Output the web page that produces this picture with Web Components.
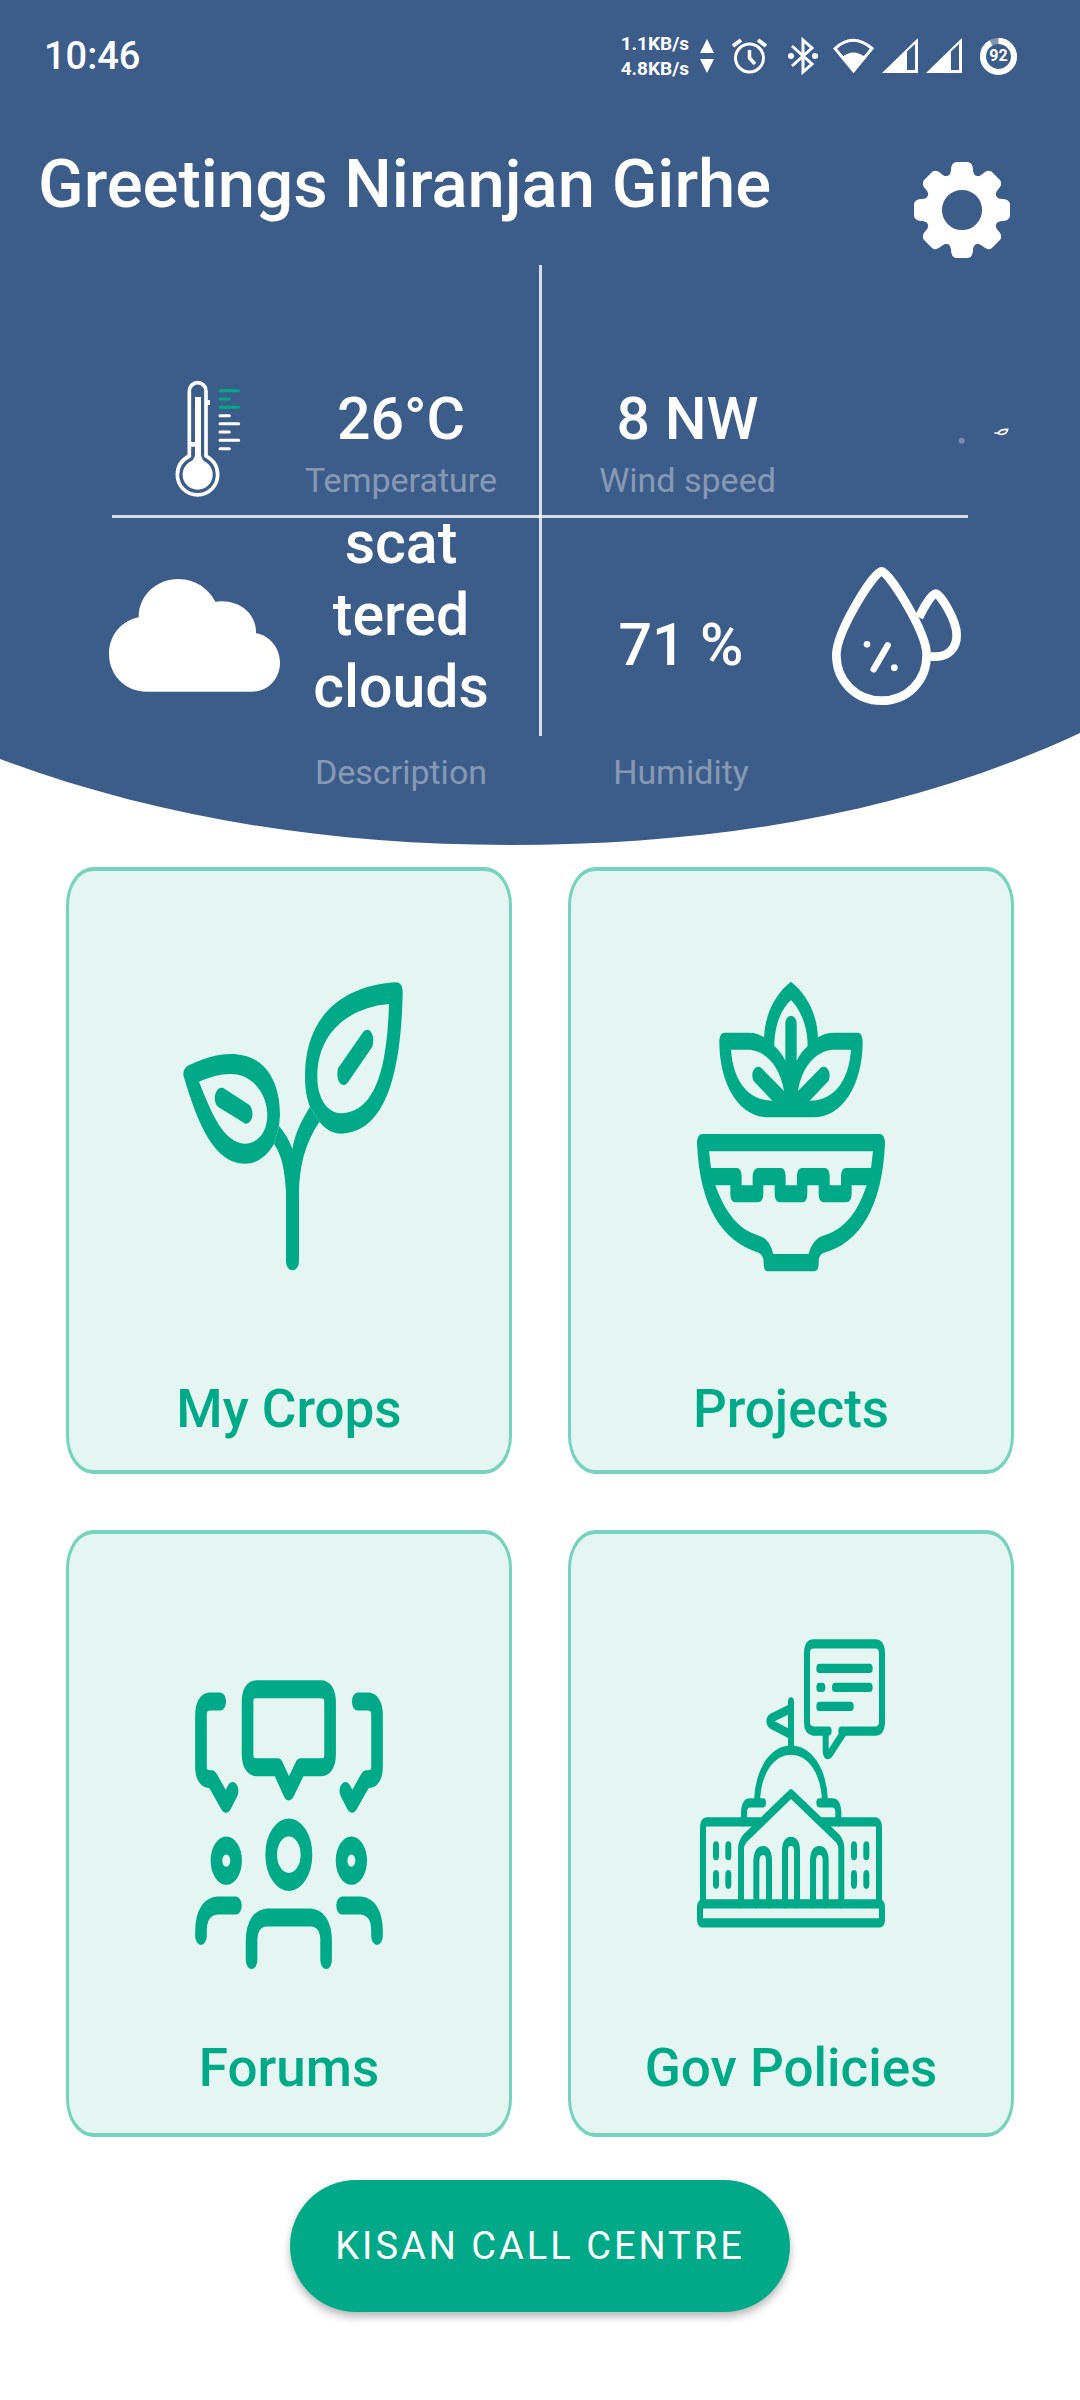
<!DOCTYPE html>
<html lang="en">
<head>
<meta charset="utf-8">
<meta name="viewport" content="width=device-width, initial-scale=1">
<title>Kisan Home</title>
<style>
  html, body { margin: 0; background: #fff; }
  body { font-family: Roboto, "Noto Sans", sans-serif; --green: #00aa88; --mint: #e5f6f2; --mint-edge: #76d3be; }
</style>
</head>
<body>
<kisan-home></kisan-home>

<script>
const cardMark = (box, body, w = 188) => ({ w, h: 289, box, body });
const ICONS = {
  arrows: { w: 14, h: 34, box: '0 0 14 34', body: '<path d="M7 0L14 14H0ZM0 20H14L7 34Z"/>' },
  alarm: { w: 35, h: 36, box: '0 0 35 36', body: '<g fill="none" stroke="currentColor" stroke-width="3"><circle cx="17.500" cy="20" r="14"/><path d="M1 8L9 2M34 8L26 2" stroke-width="4"/><path d="M17.500 12V20L23 26" stroke-width="3.500"/></g>' },
  bluetooth: { w: 36, h: 36, box: '0 0 36 36', body: '<path d="M7 8L27 26L18 34V2L27 10L7 28" fill="none" stroke="currentColor" stroke-width="3"/><circle cx="6" cy="18" r="3"/><circle cx="30" cy="18" r="3"/>' },
  wifi: { w: 41, h: 36, box: '0 0 41 36', body: '<path d="M2 10.500Q20 -6 39 10.500L20.500 33Z" fill="none" stroke="currentColor" stroke-width="3"/><path d="M9 19Q20.500 10 32 19L20.500 35Z"/>' },
  signal: { w: 36, h: 36, box: '0 0 36 36', body: '<path d="M0 35L36 0V35ZM25 13.500V32H33V6Z" fill-rule="evenodd"/>' },
  gear: { w: 96, h: 96, box: '0 0 96 96', body: '<circle cx="48" cy="48" r="28.500" fill="none" stroke="currentColor" stroke-width="17"/>' +
    [0, 45, 90, 135, 180, 225, 270, 315].map(a => `<path transform="rotate(${a} 48 48)" d="M42 0H54Q59 1 59 8Q59 13 65 17H31Q37 13 37 8Q37 1 42 0Z"/>`).join('') },
  thermometer: { w: 172, h: 116, box: '87 123 516 348', body: '<path d="M328 348V153A25 25 0 0 1 378 153V348C400 360 413 380 413 404A60 60 0 1 1 292 404C292 380 305 360 328 348Z" fill="none" stroke="currentColor" stroke-width="11"/><path d="M345 171H363V345Q365 360 380 370H326Q343 360 345 345ZM332 306H346V320H332ZM380 180H390V195H380Z"/><circle cx="353" cy="404" r="45"/><g fill="none" stroke-linecap="round" stroke-width="9"><path d="M420 152H476M420 177H448M420 202H476" stroke="#00aa88"/><path d="M420 227H448M420 251H476M420 276H448M420 301H476M420 326H448" stroke="currentColor"/></g>' },
  wind: { w: 172, h: 116, box: '811 123 516 348', body: '<circle cx="1263" cy="302" r="9" opacity=".3"/><path d="M1361 279H1373Q1376 268 1401 268Q1398 283 1382 283Q1374 283 1371 279" fill="none" stroke="currentColor" stroke-width="5"/>' },
  cloud: { w: 172, h: 140, box: '87 678 516 420', body: '<path d="M200 1055C130 1055 87 1000 87 942C87 885 125 842 176 832C176 765 230 717 296 717C345 717 385 745 406 785C470 775 530 815 528 880C570 887 600 925 600 968C600 1015 565 1055 515 1055Z"/>' },
  drops: { w: 172, h: 140, box: '819 678 516 420', body: '<g fill="none" stroke="currentColor" stroke-width="26" stroke-linecap="round"><path d="M1025 694C1002 694 889 875 889 945C889 1025 950 1082 1025 1082C1100 1082 1160 1025 1160 945C1160 875 1045 694 1025 694Z"/><path d="M1137 832C1150 805 1175 761 1187 761C1200 761 1250 840 1250 885C1250 925 1225 950 1187 950H1172" stroke-linecap="butt"/><path d="M1043 916L1001 988" stroke-width="19"/></g><circle cx="981" cy="913" r="10"/><circle cx="1063" cy="983" r="10"/>' },
  crops: cardMark('45 96 684 867', '<path fill-rule="evenodd" d="M706 97C722 97 729 108 728 132C722 390 670 545 545 551C515 551 495 535 478 516L450 470C440 445 435 415 435 378C435 200 545 108 706 97ZM687 162C570 172 472 245 472 380C472 450 505 490 545 490C655 485 682 330 687 162Z"/><path fill-rule="evenodd" d="M70 375C70 355 80 348 95 342C130 326 170 312 212 312C320 312 360 400 360 495L357 528L342 582C322 615 295 641 255 641C165 641 115 530 70 375ZM117 395C150 381 180 372 212 372C280 372 322 435 322 495C322 550 290 581 255 581C190 578 155 490 117 395Z"/><path d="M357 528C375 550 388 570 397 597C405 550 425 510 450 470L478 516C435 580 417 650 417 735V932C417 970 378 970 378 932V725C374 665 368 620 342 582Z"/><path d="M190 414L265 463C285 478 280 522 256 521L175 471C155 455 165 408 190 414Z"/><path d="M622 239C635 239 645 262 637 290L565 395C548 420 525 395 534 355L608 248C612 242 617 239 622 239Z"/>', 228),
  projects: cardMark('81 96 564 867', '<path fill-rule="evenodd" d="M97 552H629C640 552 645 565 645 580C637 770 570 880 460 909C448 915 446 925 446 940C446 955 442 964 432 964H294C284 964 281 955 281 940C281 925 278 915 266 908C156 875 89 770 81 580C81 565 86 552 97 552ZM117 604H609L603 654H527C518 654 513 665 513 680V706H479V680C479 665 474 654 465 654H396C386 654 381 665 381 680V706H347V680C347 665 342 654 333 654H265C254 654 248 665 248 680V706H215V680C215 665 210 654 201 654H123ZM136 706H181V730C181 748 187 757 197 757H264C274 757 280 748 280 730V706H314V730C314 748 320 757 330 757H397C407 757 412 748 412 730V706H446V730C446 748 452 757 462 757H529C539 757 545 748 545 730V706H590C562 790 522 840 459 857C440 862 422 885 416 912H310C304 885 288 862 267 857C204 840 165 785 136 706Z"/><path fill-rule="evenodd" d="M363 95C405 128 441 185 444 262C460 252 475 248 495 248H562C572 248 578 258 578 275C578 400 520 502 430 502H296C205 502 148 400 148 275C148 258 154 248 164 248H235C255 248 270 253 282 262C286 185 320 128 363 95ZM363 150C335 175 313 225 313 288C327 300 338 315 346 332V222C346 190 380 190 380 222V332C388 315 400 300 413 288C413 230 392 180 363 150ZM183 299H240C290 305 330 350 342 423L275 355C258 340 240 365 250 392L307 452C240 452 190 400 183 299ZM543 299H486C436 305 396 350 384 423L451 355C468 340 486 365 476 392L419 452C486 452 536 400 543 299Z"/>'),
  forums: cardMark('75 91 565 866', '<g transform="scale(1 1.54)" fill="none" stroke="currentColor" stroke-width="35" stroke-linecap="round" stroke-linejoin="round"><path d="M324 229H263Q233 229 233 203V101Q233 77 261 77H453Q481 77 481 103V203Q481 229 453 229H392L357 276Z"/><path d="M151 101H118Q93 103 93 127V228Q93 251 118 252H126L168 300L188 275"/><path d="M564 101H597Q622 103 622 127V228Q622 251 597 252H589L547 300L527 275"/><circle cx="169" cy="410.500" r="29.500"/><circle cx="357" cy="399" r="53"/><circle cx="545" cy="410.500" r="29.500"/><path d="M198 498H142Q93 502 93 548V557M517 498H573Q622 502 622 548V557M245 604V567Q245 524 292 521H422Q469 524 469 567V604"/></g>'),
  policies: cardMark('81 87 564 868', '<g transform="scale(1 1.54)" fill="none" stroke="currentColor" stroke-width="18" stroke-linecap="round" stroke-linejoin="round"><rect x="90" y="573" width="546" height="37" rx="6"/><path d="M99 573V424Q99 413 110 413H270M456 413H616Q627 413 627 424V573"/><path d="M213 573V466Q213 455 224 446L363 358L504 446Q514 455 514 466V573"/><path d="M345 573V470Q345 451 363 451Q381 451 381 470V573M259 573V489Q261 469 279 469Q297 469 297 489V573M429 573V489Q430 469 448 469Q467 469 467 489V573"/><path d="M138 460V479M175 460V479M138 516V535M175 516V535M552 460V479M589 460V479M552 516V535M589 516V535"/><path d="M222 413V393Q224 376 240 376H279M505 413V393Q503 376 487 376H448"/><path d="M261 372C265 310 310 273 363 273C416 273 461 310 465 372"/><path d="M363 273V179M363 192L304 211Q292 217 304 223L363 243"/><path d="M476 236H430Q411 234 411 220V82Q413 66 430 66H616Q634 66 636 82V220Q634 236 616 236H514M467 238V276Q470 286 480 280L520 240"/><path d="M448 114H599M448 151H457M495 151H599M448 188H542"/></g>')
};

class AppIcon extends HTMLElement {
  connectedCallback() {
    if (this.shadowRoot) return;
    const icon = ICONS[this.getAttribute('name')];
    const root = this.attachShadow({ mode: 'open' });
    root.innerHTML = `<style>
      :host { display: block; flex: none; line-height: 0; }
      svg { display: block; overflow: visible; }
    </style><svg width="${icon.w}" height="${icon.h}" viewBox="${icon.box}" preserveAspectRatio="none" fill="currentColor" aria-hidden="true">${icon.body}</svg>`;
  }
}
customElements.define('app-icon', AppIcon);

function define(tag, html) {
  const template = document.createElement('template');
  template.innerHTML = html;
  customElements.define(tag, class extends HTMLElement {
    constructor() {
      super();
      this.attachShadow({ mode: 'open' }).append(template.content.cloneNode(true));
    }
  });
}

define('battery-ring', `<style>
    :host { display: grid; place-items: center; width: 37px; height: 37px; font: 700 16px/20px Roboto, sans-serif; }
    svg, span { grid-area: 1 / 1; }
  </style>
  <svg width="37" height="37" viewBox="0 0 37 37" fill="none" stroke="#fff" stroke-width="6" aria-hidden="true">
    <circle cx="18.500" cy="18.500" r="15.500" opacity=".35"/>
    <circle cx="18.500" cy="18.500" r="15.500" pathLength="100" stroke-dasharray="92 8" transform="rotate(-90 18.500 18.500)"/>
  </svg>
  <span><slot></slot></span>`);

define('status-bar', `<style>
    :host { display: flex; justify-content: space-between; align-items: center; height: 112px; padding: 0 63px 0 44px; color: #fff; }
    time { font-size: 38px; line-height: 48px; font-weight: 500; }
    .tray, .speed, .links, .signals { display: flex; align-items: center; }
    .tray { gap: 18px; }
    .links { gap: 12px; }
    .speed { gap: 11px; font: 700 19px/25px Roboto, sans-serif; text-align: right; }
    .rate { display: block; }
    .signals { gap: 8px; }
  </style>
  <time>10:46</time>
  <div class="tray">
    <div class="speed"><div><span class="rate">1.1KB/s</span><span class="rate">4.8KB/s</span></div><app-icon name="arrows"></app-icon></div>
    <app-icon name="alarm"></app-icon>
    <div class="links">
      <app-icon name="bluetooth"></app-icon>
      <div class="signals"><app-icon name="wifi"></app-icon><app-icon name="signal"></app-icon><app-icon name="signal"></app-icon></div>
    </div>
    <battery-ring>92</battery-ring>
  </div>`);

define('weather-cell', `<style>
    :host { display: grid; grid-template-columns: 1fr 1fr; align-items: end; justify-items: center; }
    ::slotted(app-icon) { margin-bottom: var(--icon-gap, 8px); }
    .text { display: flex; flex-direction: column; align-items: center; gap: var(--label-gap, 0); text-align: center; }
    .value { font-size: 59px; line-height: 72px; font-weight: 500; }
    .label { font-size: 34px; line-height: 50px; color: rgba(255, 255, 255, .4); }
    :host([flip]) .text { order: -1; }
  </style>
  <slot name="icon"></slot>
  <div class="text"><div class="value"><slot></slot></div><div class="label"><slot name="label"></slot></div></div>`);

define('weather-board', `<style>
    :host { display: grid; grid-template-columns: 1fr 1fr; grid-template-rows: minmax(240px, auto) auto; position: relative; color: #fff; }
    weather-cell { padding: 0 36px 0 92px; }
    weather-cell[flip] { padding: 0 79px 0 43px; }
    .low { padding-top: 2px; --icon-gap: 91px; --label-gap: 24px; }
    .low[flip] { padding: 2px 72px 0 32px; --label-gap: 66px; }
    .rule { position: absolute; background: rgba(255, 255, 255, .8); }
    .down { left: 50%; top: 0; bottom: 61px; width: 3px; margin-left: -1px; }
    .across { left: 112px; right: 112px; top: 250px; height: 3px; }
  </style>
  <weather-cell><app-icon slot="icon" name="thermometer"></app-icon>26°C<span slot="label">Temperature</span></weather-cell>
  <weather-cell flip><app-icon slot="icon" name="wind"></app-icon>8 NW<span slot="label">Wind speed</span></weather-cell>
  <weather-cell class="low"><app-icon slot="icon" name="cloud"></app-icon>scat<br>tered<br>clouds<span slot="label">Description</span></weather-cell>
  <weather-cell class="low" flip><app-icon slot="icon" name="drops"></app-icon>71 %<span slot="label">Humidity</span></weather-cell>
  <div class="rule down"></div><div class="rule across"></div>`);

define('home-header', `<style>
    :host { display: block; position: relative; padding-bottom: 48px; color: #fff; }
    .curve { position: absolute; inset: 0; width: 100%; height: 100%; z-index: -1; }
    .top { display: flex; justify-content: space-between; align-items: flex-start; padding: 28px 70px 7px 38px; }
    h1 { margin: 0; font-size: 67px; line-height: 88px; font-weight: 500; }
    button { margin: 22px 0 0; padding: 0; border: 0; background: none; color: inherit; }
  </style>
  <svg class="curve" viewBox="0 0 1080 845" preserveAspectRatio="none" aria-hidden="true"><path d="M0 0H1080V733C910 812 720 845 510 845C320 845 150 815 0 759Z" fill="#3c5c89"/></svg>
  <status-bar></status-bar>
  <div class="top"><h1><slot></slot></h1><button type="button" aria-label="Settings"><app-icon name="gear"></app-icon></button></div>
  <weather-board></weather-board>`);

define('menu-card', `<style>
    :host { display: block; }
    a { box-sizing: border-box; height: 100%; display: flex; flex-direction: column; justify-content: space-between; align-items: center;
        padding: var(--icon-top, 111px) 0 var(--label-bottom, 25px); background: var(--mint); border: solid var(--mint-edge); border-width: 4px 3px;
        border-radius: 27px / 38px; color: var(--green); text-decoration: none; }
    .label { font-size: 53px; line-height: 72px; font-weight: 500; }
  </style>
  <a href="#"><slot name="icon"></slot><span class="label"><slot></slot></span></a>`);

define('call-button', `<style>
    :host { display: flex; justify-content: center; }
    button { width: 500px; height: 132px; border: 0; border-radius: 66px; background: var(--green); color: #fff; font: 400 38px/48px Roboto, sans-serif;
        letter-spacing: 3px; text-transform: uppercase; box-shadow: 0 5px 8px rgba(0, 0, 0, .28); }
  </style>
  <button type="button"><slot></slot></button>`);

define('kisan-home', `<style>
    :host { display: block; position: relative; z-index: 0; padding-bottom: 88px; }
    main { display: grid; grid-template-columns: 1fr 1fr; grid-auto-rows: minmax(607px, auto); gap: 56px; padding: 22px 66px 43px; }
    .low { --label-bottom: 29px; }
    .forums { --icon-top: 146px; }
    .policies { --icon-top: 105px; }
  </style>
  <home-header>Greetings Niranjan Girhe</home-header>
  <main>
    <menu-card><app-icon slot="icon" name="crops"></app-icon>My Crops</menu-card>
    <menu-card><app-icon slot="icon" name="projects"></app-icon>Projects</menu-card>
    <menu-card class="low forums"><app-icon slot="icon" name="forums"></app-icon>Forums</menu-card>
    <menu-card class="low policies"><app-icon slot="icon" name="policies"></app-icon>Gov Policies</menu-card>
  </main>
  <call-button>KISAN CALL CENTRE</call-button>`);
</script>
</body>
</html>
